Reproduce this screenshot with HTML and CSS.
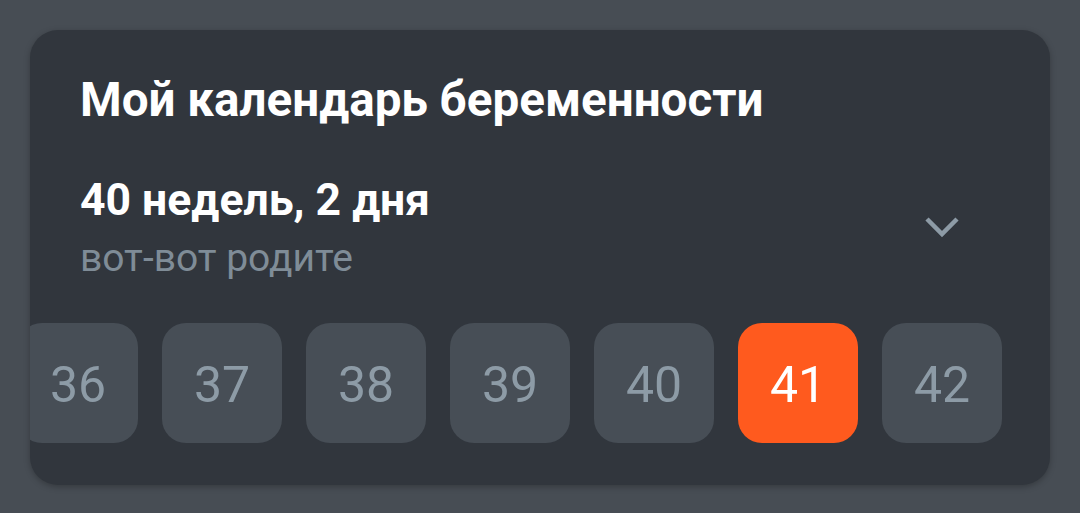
FILE: index.html
```html
<!DOCTYPE html>
<html lang="ru">
<head>
  <meta charset="UTF-8" />
  <title>Мой календарь беременности</title>
  <link rel="stylesheet" href="styles.css">
</head>
<body>
  <div class="card">
    <h2 class="card-title">Мой календарь беременности</h2>

    <div class="term-row">
      <div class="term">
        <div class="term-value">40 недель, 2 дня</div>
        <div class="term-note">вот-вот родите</div>
      </div>
      <svg class="chevron" width="36" height="24" viewBox="0 0 36 24">
        <polyline points="3,4 18,19 33,4" />
      </svg>
    </div>

    <div class="weeks">
      <div class="week">36</div>
      <div class="week">37</div>
      <div class="week">38</div>
      <div class="week">39</div>
      <div class="week">40</div>
      <div class="week current">41</div>
      <div class="week">42</div>
    </div>
  </div>
</body>
</html>
```

FILE: styles.css
```css
body {
  margin: 0;
  padding: 30px;
  background: #474d54;
  font-family: Roboto, 'Noto Sans', sans-serif;
}

.card {
  width: 1020px;
  height: 455px;
  box-sizing: border-box;
  padding: 0 0 0 50px;
  background: #31363d;
  border-radius: 28px;
  overflow: hidden;
  box-shadow: 0 2px 6px rgba(0, 0, 0, 0.25);
}

.card-title {
  margin: 0;
  padding-top: 42px;
  font-size: 47.6px;
  line-height: 56px;
  font-weight: bold;
  color: #fff;
}

.term-row {
  display: flex;
  align-items: center;
  justify-content: space-between;
  padding-right: 90px;
  margin-top: 46px;
}

.term-value {
  font-size: 44.5px;
  line-height: 52px;
  font-weight: bold;
  color: #fff;
}

.term-note {
  margin-top: 10px;
  font-size: 39px;
  line-height: 44px;
  color: #7f8c97;
}

.chevron polyline {
  fill: none;
  stroke: #8d9ba6;
  stroke-width: 4.5;
}

.weeks {
  display: flex;
  gap: 24px;
  margin: 43px 0 0 -62px;
}

.week {
  flex: 0 0 120px;
  height: 120px;
  border-radius: 24px;
  background: #474e56;
  color: #8d9ba6;
  font-size: 50px;
  padding-top: 4px;
  box-sizing: border-box;
  display: flex;
  align-items: center;
  justify-content: center;
}

.week.current {
  background: #ff5a1e;
  color: #fff;
}
```
